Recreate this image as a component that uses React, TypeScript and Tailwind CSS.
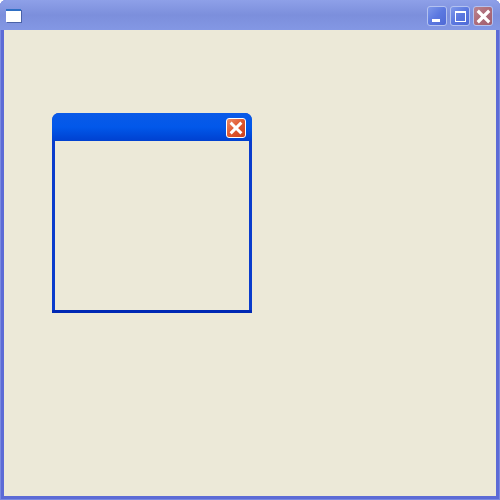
const TitleButton = ({ className, children }: { className: string; children: React.ReactNode }) => (
  <div className={`flex h-[20px] w-[20px] items-center justify-center rounded-[3px] border border-[#b4c2f0] ${className}`}>
    {children}
  </div>
);

const CloseGlyph = ({ size }: { size: number }) => (
  <svg width={size} height={size} viewBox="0 0 13 13">
    <path d="M2.5 2.5 L10.5 10.5 M10.5 2.5 L2.5 10.5" stroke="#ffffff" strokeWidth="2.8" strokeLinecap="square" fill="none" />
  </svg>
);

export default function App() {
  return (
    <div className="flex h-[500px] w-[500px] flex-col overflow-hidden rounded-t-[6px] bg-[#5c6bd6] shadow-[inset_0_0_0_1px_#7a8ae0]">
      {/* Main window title bar */}
      <div className="flex h-[30px] shrink-0 items-start justify-between bg-gradient-to-b from-[#8ea0e8] via-[#7c8fdc] to-[#8397e4] pl-[6px] pr-[7px] pt-[6px]">
        <div className="mt-[3px] flex h-[13px] w-[15px] flex-col bg-white shadow-[1px_1px_0_#4a62a8]">
          <div className="h-[2px] bg-[#2f6fc4]" />
        </div>
        <div className="flex items-center gap-[3px]">
          <TitleButton className="bg-gradient-to-br from-[#7f98ea] via-[#5b78e0] to-[#4f69d6]">
            <div className="ml-[-3px] mt-[9px] h-[3px] w-[8px] bg-white" />
          </TitleButton>
          <TitleButton className="bg-gradient-to-br from-[#7f98ea] via-[#5b78e0] to-[#4f69d6]">
            <div className="h-[11px] w-[11px] border border-t-[2px] border-white" />
          </TitleButton>
          <TitleButton className="bg-gradient-to-br from-[#b98490] via-[#ad6b78] to-[#a05f70]">
            <CloseGlyph size={15} />
          </TitleButton>
        </div>
      </div>

      {/* Client area */}
      <div className="relative mx-[4px] mb-[4px] flex-1 bg-[#ece9d8]">
        {/* Child window */}
        <div className="absolute left-[48px] top-[83px] flex h-[200px] w-[200px] flex-col overflow-hidden rounded-t-[7px] bg-[#0a3ccc]">
          <div className="flex h-[28px] shrink-0 items-start justify-end bg-gradient-to-b from-[#0a5ae8] via-[#0258ea] to-[#0040d0] pr-[6px] pt-[5px]">
            <div className="flex h-[20px] w-[20px] items-center justify-center rounded-[3px] border border-white bg-gradient-to-br from-[#e98a66] via-[#e0572f] to-[#c9401e]">
              <CloseGlyph size={14} />
            </div>
          </div>
          <div className="mx-[3px] flex-1 bg-[#ece9d8]" />
          <div className="h-[3px] shrink-0 bg-[#0028b4]" />
        </div>
      </div>
    </div>
  );
}
